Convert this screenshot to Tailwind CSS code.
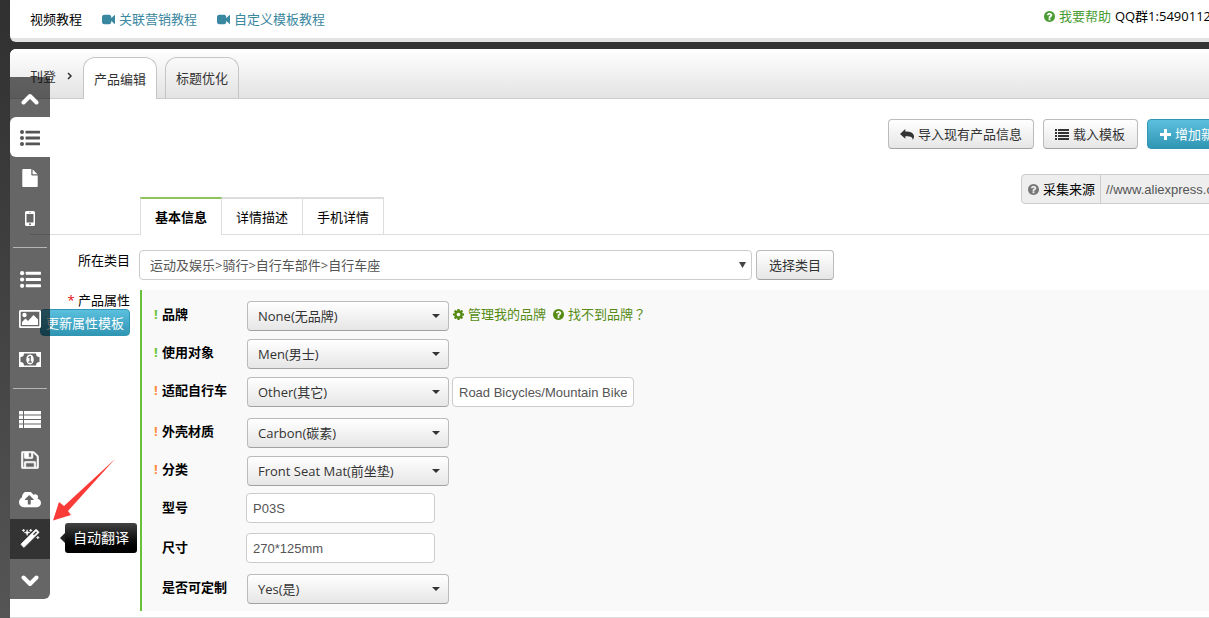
<!DOCTYPE html>
<html lang="zh-CN">
<head>
<meta charset="utf-8">
<title>产品编辑</title>
<script src="https://cdn.jsdelivr.net/npm/@tailwindcss/browser@4"></script>
</head>
<body class="min-h-screen overflow-hidden bg-linear-to-b from-[#303030] to-[#555] font-['Open_Sans','Noto_Sans_CJK_SC',sans-serif] text-[13px] leading-5 text-black">
<svg class="hidden" aria-hidden="true">
  <symbol id="video" viewBox="0 0 1792 1792"><path d="M1792 352v1088q0 42-39 59-13 5-25 5-27 0-45-19l-403-403v166q0 119-84.5 203.5t-203.5 84.5h-704q-119 0-203.5-84.5t-84.5-203.5v-704q0-119 84.5-203.5t203.5-84.5h704q119 0 203.5 84.5t84.5 203.5v165l403-402q18-19 45-19 12 0 25 5 39 17 39 59z"/></symbol>
  <symbol id="question" viewBox="128 128 1536 1536"><path d="M1024 1376v-192q0-14-9-23t-23-9h-192q-14 0-23 9t-9 23v192q0 14 9 23t23 9h192q14 0 23-9t9-23zm256-672q0-88-55.500-163t-138.500-116-170-41q-243 0-371 213-15 24 8 42l132 100q7 6 19 6 16 0 25-12 53-68 86-92 34-24 86-24 48 0 85.500 26t37.500 59q0 38-20 61t-68 45q-63 28-115.500 86.500t-52.500 125.500v36q0 14 9 23t23 9h192q14 0 23-9t9-23q0-19 21.500-49.500t54.500-49.500q32-18 49-28.500t46-35 44.500-48 28-60.500 12.500-81zm384 192q0 209-103 385.500t-279.500 279.500-385.500 103-385.500-103-279.500-279.500-103-385.500 103-385.500 279.500-279.500 385.500-103 385.500 103 279.500 279.500 103 385.500z"/></symbol>
  <symbol id="cog" viewBox="128 128 1536 1536"><path d="M1152 896q0-106-75-181t-181-75-181 75-75 181 75 181 181 75 181-75 75-181zm512-109v222q0 12-8 23t-20 13l-185 28q-19 54-39 91 35 50 107 138 10 12 10 25t-9 23q-27 37-99 108t-94 71q-12 0-26-9l-138-108q-44 23-91 38-16 136-29 186-7 28-36 28h-222q-14 0-24.500-8.500t-11.500-21.500l-28-184q-49-16-90-37l-141 107q-10 9-25 9-14 0-25-11-126-114-165-168-7-10-7-23 0-12 8-23 15-21 51-66.500t54-70.500q-27-50-41-99l-183-27q-13-2-21-12.500t-8-23.500v-222q0-12 8-23t19-13l186-28q14-46 39-92-40-57-107-138-10-12-10-24 0-10 9-23 26-36 98.500-107.500t94.500-71.500q13 0 26 10l138 107q44-23 91-38 16-136 29-186 7-28 36-28h222q14 0 24.500 8.500t11.500 21.500l28 184q49 16 90 37l142-107q9-9 24-9 13 0 25 10 129 119 165 170 7 8 7 22 0 12-8 23-15 21-51 66.500t-54 70.500q26 50 41 98l183 28q13 2 21 12.500t8 23.500z"/></symbol>
  <symbol id="reply" viewBox="0 0 14 11"><path d="M5.300 0v2.500c5 0 8.300 1.300 8.700 4.600.1 1.500-.5 2.800-1.300 3.900.2-2.800-2-4-7.400-3.800V9.700L0 4.900z"/></symbol>
  <symbol id="list" viewBox="0 0 14 11"><path d="M0 0h2v2H0zM3 0h11v2H3zM0 3h2v2H0zM3 3h11v2H3zM0 6h2v2H0zM3 6h11v2H3zM0 9h2v2H0zM3 9h11v2H3z"/></symbol>
  <symbol id="list-big" viewBox="0 0 22 17"><path d="M0 0h4v3.500H0zM5 0h17v3.500H5zM0 4.500h4V8H0zM5 4.500h17V8H5zM0 9h4v3.500H0zM5 9h17v3.500H5zM0 13.500h4V17H0zM5 13.500h17V17H5z"/></symbol>
  <symbol id="list-ul" viewBox="0 0 20 16"><circle cx="2" cy="2" r="2"/><circle cx="2" cy="8" r="2"/><circle cx="2" cy="14" r="2"/><rect x="5.500" y=".7" width="14.500" height="2.800" rx=".4"/><rect x="5.500" y="6.600" width="14.500" height="2.800" rx=".4"/><rect x="5.500" y="12.500" width="14.500" height="2.800" rx=".4"/></symbol>
  <symbol id="plus" viewBox="0 0 11 11"><path d="M4 0h3v4h4v3H7v4H4V7H0V4h4z"/></symbol>
  <symbol id="file" viewBox="128 0 1536 1792"><path d="M1152 512v-472q22 14 36 28l408 408q14 14 28 36h-472zm-128 32q0 40 28 68t68 28h544v1056q0 40-28 68t-68 28h-1344q-40 0-68-28t-28-68v-1600q0-40 28-68t68-28h800v544z"/></symbol>
  <symbol id="mobile" viewBox="0 0 10 15"><path fill-rule="evenodd" d="M1.500 0h7Q10 0 10 1.500v12Q10 15 8.500 15h-7Q0 15 0 13.500v-12Q0 0 1.500 0zM1.500 3v8.500h7V3zM4 1v.6h2V1zM5 12.300a1 1 0 1 0 0 2 1 1 0 1 0 0-2z"/></symbol>
  <symbol id="image" viewBox="0 0 22 18"><path fill-rule="evenodd" d="M1.500 0h19Q22 0 22 1.500v15Q22 18 20.500 18h-19Q0 18 0 16.500v-15Q0 0 1.500 0zM1.700 1.700v14.600h18.600V1.700z"/><circle cx="5.500" cy="5" r="2.200"/><path d="M3 15v-3l3.500-3.500L9 11l5.500-6L19 9.500V15z"/></symbol>
  <symbol id="money" viewBox="0 0 22 15"><path fill-rule="evenodd" d="M0 0h22v15H0zM5 1.500A3.500 3.500 0 0 1 1.500 5v5A3.500 3.500 0 0 1 5 13.500h12A3.500 3.500 0 0 1 20.500 10V5A3.500 3.500 0 0 1 17 1.500zM11 2.500c5 0 5 10 0 10s-5-10 0-10zM9 5.300l.8.9.7-.5V9.500H9.300v1.200h3.600V9.500h-1.100V4h-1.200z"/></symbol>
  <symbol id="save" viewBox="88 88 1616 1616"><path stroke="currentColor" stroke-width="60" d="M512 1536h768v-384h-768v384zm896 0h128v-896q0-14-10-38.500t-20-34.500l-281-281q-10-10-34-20t-39-10v416q0 40-28 68t-68 28h-576q-40 0-68-28t-28-68v-416h-128v1280h128v-416q0-40 28-68t68-28h832q40 0 68 28t28 68v416zm-384-928v-320q0-13-9.500-22.500t-22.500-9.500h-192q-13 0-22.500 9.500t-9.500 22.500v320q0 13 9.500 22.500t22.500 9.500h192q13 0 22.500-9.500t9.500-22.500zm640 32v928q0 40-28 68t-68 28h-1344q-40 0-68-28t-28-68v-1344q0-40 28-68t68-28h928q40 0 88 20t76 48l280 280q28 28 48 76t20 88z"/></symbol>
  <symbol id="cloud" viewBox="-64 256 1920 1280"><path d="M1216 864q0-14-9-23l-352-352q-9-9-23-9t-23 9l-351 351q-10 12-10 24 0 14 9 23t23 9h224v352q0 13 9.500 22.500t22.500 9.500h192q13 0 22.500-9.500t9.500-22.500v-352h224q13 0 22.500-9.500t9.500-22.500zm640 288q0 159-112.500 271.500t-271.500 112.500h-1088q-185 0-316.500-131.500t-131.500-316.500q0-130 70-240t188-165q-2-30-2-43 0-212 150-362t362-150q156 0 285.500 87t188.500 231q71-62 166-62 106 0 181 75t75 181q0 76-41 138 130 31 213.500 135.500t83.500 238.500z"/></symbol>
  <symbol id="magic" viewBox="0 0 1792 1792"><path stroke="currentColor" stroke-width="50" d="M1254 581l293-293-107-107-293 293zm447-293q0 27-18 45l-1286 1286q-18 18-45 18t-45-18l-198-198q-18-18-18-45t18-45l1286-1286q18-18 45-18t45 18l198 198q18 18 18 45zm-1351-190l98 30-98 30-30 98-30-98-98-30 98-30 30-98zm350 162l196 60-196 60-60 196-60-196-196-60 196-60 60-196zm930 478l98 30-98 30-30 98-30-98-98-30 98-30 30-98zm-640-640l98 30-98 30-30 98-30-98-98-30 98-30 30-98z"/></symbol>
  <symbol id="caret" viewBox="0 0 8 4"><path d="M0 0h8L4 4z"/></symbol>
</svg>

<div class="flex min-h-screen flex-col gap-[7px] pl-[10px]">
  <header class="flex h-[42px] items-center overflow-hidden rounded-bl-md border-b-4 border-[#e3e3e3] bg-white pl-5 whitespace-nowrap">
    <span>视频教程</span>
    <a href="#" class="ml-5 flex items-center gap-1 text-[#3a87a0]"><svg class="size-[13px] fill-current"><use href="#video"/></svg>关联营销教程</a>
    <a href="#" class="ml-5 flex items-center gap-1 text-[#3a87a0]"><svg class="size-[13px] fill-current"><use href="#video"/></svg>自定义模板教程</a>
    <div class="-mr-[2px] ml-auto flex h-[34px] items-start gap-1 pt-1">
      <a href="#" class="flex items-center gap-1 text-[#4a9c34]"><svg class="size-[11px] fill-current"><use href="#question"/></svg>我要帮助</a>
      <span>QQ群1:5490112</span>
    </div>
  </header>

  <main class="flex-1 overflow-hidden rounded-tl-md bg-white whitespace-nowrap">
    <nav class="flex h-[50px] items-end border-b border-[#ccc] bg-linear-to-b from-white to-[#e3e3e3] pl-5 text-[#333]">
      <a href="#" class="mb-3">刊登</a>
      <svg class="mr-[10px] mb-[18px] ml-[11px] h-2 w-[6px] fill-none stroke-[#333] stroke-[1.5]" viewBox="0 0 6 8"><path d="M1 1l3 3-3 3"/></svg>
      <a href="#" class="-mb-px flex h-[42px] w-[74px] items-center justify-center rounded-t-xl border border-b-0 border-[#c5c5c5] bg-white">产品编辑</a>
      <a href="#" class="ml-2 flex h-[41px] w-[74px] items-center justify-center rounded-t-xl border border-b-0 border-[#c5c5c5]">标题优化</a>
    </nav>

    <div class="mt-5 -mr-5 flex justify-end gap-[9px] text-[#333]">
      <button class="flex h-[30px] items-center gap-1 rounded border border-[#bbb] border-b-[#a2a2a2] bg-linear-to-b from-white to-[#e6e6e6] px-[11px]"><svg class="h-[11px] w-[14px] fill-current"><use href="#reply"/></svg>导入现有产品信息</button>
      <button class="flex h-[30px] items-center gap-1 rounded border border-[#bbb] border-b-[#a2a2a2] bg-linear-to-b from-white to-[#e6e6e6] pr-3 pl-[11px]"><svg class="h-[11px] w-[14px] fill-current"><use href="#list"/></svg>载入模板</button>
      <button class="flex h-[30px] w-[82px] items-center gap-1 rounded border border-[#2f96b4] bg-linear-to-b from-[#5bc0de] to-[#2f96b4] px-3 text-white"><svg class="size-[11px] shrink-0 fill-current"><use href="#plus"/></svg>增加新</button>
    </div>

    <div class="mt-[25px] -mr-5 flex justify-end">
      <label for="source" class="flex h-[30px] items-center gap-1 rounded-l border border-[#ccc] bg-[#eee] pr-[5px] pl-[6px]"><svg class="size-[11px] fill-[#777]"><use href="#question"/></svg>采集来源</label>
      <input id="source" readonly value="//www.aliexpress.com" class="-ml-px h-[30px] w-[129px] border border-[#ccc] bg-[#eee] px-[5px] font-['Liberation_Sans',sans-serif] text-[#555]">
    </div>

    <nav class="-mt-[7px] ml-5 flex h-[38px] border-b border-[#ddd] pl-[110px] text-center">
      <a href="#" class="-mb-px w-[82px] border-x border-t-2 border-x-[#ddd] border-t-[#8fc45c] bg-white pt-2 font-bold">基本信息</a>
      <a href="#" class="w-[81px] border-t-2 border-r border-[#ddd] pt-2">详情描述</a>
      <a href="#" class="w-[81px] border-t-2 border-r border-[#ddd] pt-2">手机详情</a>
    </nav>

    <form>
      <div class="mt-[15px] flex">
        <label for="category" class="w-[120px] text-right">所在类目</label>
        <div class="relative ml-[9px] w-[613px]">
          <select id="category" class="h-[30px] w-full appearance-none rounded border border-[#ccc] bg-white px-[10px] text-[#555]"><option>运动及娱乐&gt;骑行&gt;自行车部件&gt;自行车座</option></select>
          <svg class="pointer-events-none absolute top-3 right-[6px] h-[6px] w-[7px] fill-[#444]" viewBox="0 0 7 6"><path d="M0 0h7L3.500 6z"/></svg>
        </div>
        <button type="button" class="ml-1 h-[30px] w-[78px] rounded border border-[#bbb] border-b-[#a2a2a2] bg-linear-to-b from-white to-[#e6e6e6] text-[#333]">选择类目</button>
      </div>

      <div class="mt-[10px] flex">
        <div class="flex w-[120px] flex-col items-end">
          <span><span class="text-red-600">*</span> 产品属性</span>
          <button type="button" class="-mt-px h-[27px] w-[90px] rounded border border-[#2f96b4] bg-linear-to-b from-[#5bc0de] to-[#2f96b4] text-white">更新属性模板</button>
        </div>

        <div class="ml-[10px] flex-1 border-l-2 border-[#67c23a] bg-[#f9f9f9] pt-[11px] pb-[7px] pl-3">
          <div class="mb-2 flex">
            <label for="brand" class="flex h-[26px] w-[93px] items-center gap-1 font-bold"><span class="w-1 text-[#67c23a]">!</span>品牌</label>
            <div class="relative w-[202px]"><select id="brand" class="h-[30px] w-full appearance-none rounded border border-[#bbb] border-b-[#a2a2a2] bg-linear-to-b from-white to-[#e6e6e6] px-[10px] text-[#333]"><option>None(无品牌)</option></select><svg class="pointer-events-none absolute top-[13px] right-[9px] h-1 w-2 fill-[#333]"><use href="#caret"/></svg></div>
            <a href="#" class="ml-1 flex h-[26px] items-center gap-1 text-[#558b12]"><svg class="size-[11px] fill-current"><use href="#cog"/></svg>管理我的品牌</a>
            <a href="#" class="ml-[7px] flex h-[26px] items-center gap-1 text-[#558b12]"><svg class="size-[11px] fill-current"><use href="#question"/></svg><span>找不到品牌<span lang="zh-TW" class="font-['Noto_Sans_CJK_TC',sans-serif]">？</span></span></a>
          </div>
          <div class="mb-2 flex">
            <label for="target" class="flex h-[26px] w-[93px] items-center gap-1 font-bold"><span class="w-1 text-[#67c23a]">!</span>使用对象</label>
            <div class="relative w-[202px]"><select id="target" class="h-[30px] w-full appearance-none rounded border border-[#bbb] border-b-[#a2a2a2] bg-linear-to-b from-white to-[#e6e6e6] px-[10px] text-[#333]"><option>Men(男士)</option></select><svg class="pointer-events-none absolute top-[13px] right-[9px] h-1 w-2 fill-[#333]"><use href="#caret"/></svg></div>
          </div>
          <div class="mb-[11px] flex">
            <label for="bike" class="flex h-[26px] w-[93px] items-center gap-1 font-bold"><span class="w-1 text-[#ff8a3c]">!</span>适配自行车</label>
            <div class="relative w-[202px]"><select id="bike" class="h-[30px] w-full appearance-none rounded border border-[#bbb] border-b-[#a2a2a2] bg-linear-to-b from-white to-[#e6e6e6] px-[10px] text-[#333]"><option>Other(其它)</option></select><svg class="pointer-events-none absolute top-[13px] right-[9px] h-1 w-2 fill-[#333]"><use href="#caret"/></svg></div>
            <input aria-label="适配自行车" value="Road Bicycles/Mountain Bike" class="ml-[3px] h-[30px] w-[182px] rounded border border-[#ccc] bg-white px-[6px] font-['Liberation_Sans',sans-serif] text-[#555]">
          </div>
          <div class="mb-2 flex">
            <label for="shell" class="flex h-[26px] w-[93px] items-center gap-1 font-bold"><span class="w-1 text-[#ff8a3c]">!</span>外壳材质</label>
            <div class="relative w-[202px]"><select id="shell" class="h-[30px] w-full appearance-none rounded border border-[#bbb] border-b-[#a2a2a2] bg-linear-to-b from-white to-[#e6e6e6] px-[10px] text-[#333]"><option>Carbon(碳素)</option></select><svg class="pointer-events-none absolute top-[13px] right-[9px] h-1 w-2 fill-[#333]"><use href="#caret"/></svg></div>
          </div>
          <div class="mb-[7px] flex">
            <label for="kind" class="flex h-[26px] w-[93px] items-center gap-1 font-bold"><span class="w-1 text-[#ff8a3c]">!</span>分类</label>
            <div class="relative w-[202px]"><select id="kind" class="h-[30px] w-full appearance-none rounded border border-[#bbb] border-b-[#a2a2a2] bg-linear-to-b from-white to-[#e6e6e6] px-[10px] text-[#333]"><option>Front Seat Mat(前坐垫)</option></select><svg class="pointer-events-none absolute top-[13px] right-[9px] h-1 w-2 fill-[#333]"><use href="#caret"/></svg></div>
          </div>
          <div class="mb-[10px] flex">
            <label for="model" class="flex h-[28px] w-[92px] items-center pl-2 font-bold">型号</label>
            <input id="model" value="P03S" class="h-[30px] w-[189px] rounded border border-[#ccc] bg-white px-[6px] font-['Liberation_Sans',sans-serif] text-[#555]">
          </div>
          <div class="mb-[11px] flex">
            <label for="size" class="flex h-[28px] w-[92px] items-center pl-2 font-bold">尺寸</label>
            <input id="size" value="270*125mm" class="h-[30px] w-[189px] rounded border border-[#ccc] bg-white px-[6px] font-['Liberation_Sans',sans-serif] text-[#555]">
          </div>
          <div class="flex">
            <label for="custom" class="flex h-[26px] w-[93px] items-center pl-2 font-bold">是否可定制</label>
            <div class="relative w-[202px]"><select id="custom" class="h-[30px] w-full appearance-none rounded border border-[#bbb] border-b-[#a2a2a2] bg-linear-to-b from-white to-[#e6e6e6] px-[10px] text-[#333]"><option>Yes(是)</option></select><svg class="pointer-events-none absolute top-[13px] right-[9px] h-1 w-2 fill-[#333]"><use href="#caret"/></svg></div>
          </div>
        </div>
      </div>
      <hr class="mt-[6px] border-[#ddd]">
    </form>
  </main>
</div>

<!-- Floating tool bar -->
<aside class="fixed top-[77px] left-[10px] w-10 overflow-hidden rounded-br-md bg-black/60 text-white">
  <button aria-label="向上" class="flex h-10 w-10 items-center justify-center pt-1"><svg class="h-3 w-[18px] fill-none stroke-current stroke-4" stroke-linecap="round" stroke-linejoin="round" viewBox="0 0 18 12"><path d="M2.500 9.500L9 3l6.500 6.500"/></svg></button>
  <button aria-label="基本信息" class="flex h-10 w-10 items-center justify-center rounded-l-md bg-white pt-[2px] text-[#555]"><svg class="h-4 w-5 fill-current"><use href="#list-ul"/></svg></button>
  <button aria-label="详情描述" class="flex h-10 w-10 items-center justify-center pt-[2px]"><svg class="h-[18px] w-4 fill-current"><use href="#file"/></svg></button>
  <button aria-label="手机详情" class="flex h-10 w-10 items-center justify-center pt-[2px]"><svg class="h-[15px] w-[10px] fill-current"><use href="#mobile"/></svg></button>
  <hr class="mx-[3px] mt-[10px] mb-[11px] border-[#b5b5b5]">
  <button aria-label="产品属性" class="flex h-10 w-10 items-center justify-center"><svg class="h-[17px] w-[21px] fill-current"><use href="#list-ul"/></svg></button>
  <button aria-label="图片" class="flex h-10 w-10 items-center justify-center"><svg class="h-[18px] w-[22px] fill-current"><use href="#image"/></svg></button>
  <button aria-label="价格" class="flex h-10 w-10 items-center justify-center"><svg class="h-[15px] w-[22px] fill-current"><use href="#money"/></svg></button>
  <hr class="mx-[3px] mt-[9px] mb-[10px] border-[#b5b5b5]">
  <button aria-label="列表" class="flex h-10 w-10 items-center justify-center"><svg class="h-[17px] w-[22px] fill-current"><use href="#list-big"/></svg></button>
  <button aria-label="保存" class="flex h-10 w-10 items-center justify-center pt-[2px]"><svg class="size-[18px] fill-current"><use href="#save"/></svg></button>
  <button aria-label="上传" class="flex h-10 w-10 items-center justify-center pt-[2px]"><svg class="h-4 w-[22px] fill-current"><use href="#cloud"/></svg></button>
  <button aria-label="自动翻译" class="flex h-10 w-10 items-center justify-center bg-[#333]"><svg class="size-5 fill-current"><use href="#magic"/></svg></button>
  <button aria-label="向下" class="flex h-10 w-10 items-center justify-center pt-1"><svg class="h-3 w-[18px] fill-none stroke-current stroke-4" stroke-linecap="round" stroke-linejoin="round" viewBox="0 0 18 12"><path d="M2.500 2.500L9 9l6.500-6.500"/></svg></button>
</aside>

<div role="tooltip" class="fixed top-[523px] left-[60px] flex items-center text-white">
  <svg class="h-[10px] w-[5px] fill-[#222]" viewBox="0 0 5 10"><path d="M5 0v10L0 5z"/></svg>
  <span class="flex h-[30px] w-[72px] items-center justify-center rounded-[3px] bg-linear-to-b from-[#444] to-black text-sm">自动翻译</span>
</div>

<svg class="pointer-events-none fixed top-[459px] left-[52px] h-[62px] w-16 fill-[#fa3c38]" viewBox="0 0 64 62" aria-hidden="true"><path d="M63 0L16 52l3 4L1 61.500 7 43l5 4z"/></svg>
</body>
</html>
